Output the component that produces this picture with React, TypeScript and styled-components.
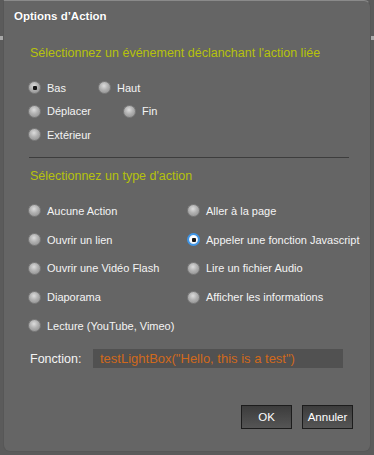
import React from "react";
import styled, { createGlobalStyle } from "styled-components";

const Global = createGlobalStyle`
  html, body { margin: 0; padding: 0; }
  body {
    width: 374px;
    height: 455px;
    overflow: hidden;
    background: linear-gradient(to bottom, #5b5b5b 0 36px, #a8a8a8 36px 40px, #5b5b5b 40px);
    font-family: "Liberation Sans", Arial, sans-serif;
  }
`;

const Page = styled.div`
  padding: 0 3px 3px 3px;
  background: transparent;
`;

const Dialog = styled.div`
  box-sizing: border-box;
  height: 452px;
  background: #656565;
  border: 1px solid #575757;
  border-top-color: #8a8a8a;
  border-radius: 0 7px 7px 7px;
  display: flex;
  flex-direction: column;
  color: #f2f2f2;
`;

const Title = styled.div`
  font-weight: bold;
  font-size: 11.5px;
  color: #ffffff;
  padding: 9px 0 0 10px;
  height: 22px;
  box-sizing: border-box;
  text-shadow: 0 0 1px rgba(0,0,0,0.3);
`;

const Body = styled.div`
  padding: 0 23px 0 24px;
  display: flex;
  flex-direction: column;
`;

const Heading = styled.div<{ $top: number }>`
  color: #b6c20c;
  font-size: 12.5px;
  padding-left: 2px;
  margin-top: ${(p) => p.$top}px;
  line-height: 16px;
`;

const FlowRow = styled.div`
  display: flex;
  align-items: center;
  gap: 32px;
  height: 23.5px;
`;

const Group = styled.div<{ $top: number }>`
  margin-top: ${(p) => p.$top}px;
  display: flex;
  flex-direction: column;
`;

const Option = styled.label`
  display: flex;
  align-items: center;
  gap: 6px;
  font-size: 11px;
  color: #f4f4f4;
  white-space: nowrap;
`;

const Dot = styled.span<{ $checked?: boolean; $focus?: boolean }>`
  position: relative;
  box-sizing: border-box;
  width: 13px;
  height: 13px;
  border-radius: 50%;
  flex: none;
  border: ${(p) => (p.$focus ? "2px solid #3f95e6" : "1px solid #7c7c7c")};
  background: ${(p) =>
    p.$focus
      ? "radial-gradient(circle at 50% 45%, #ffffff 0 45%, #dfe9f3 70%)"
      : "radial-gradient(circle at 45% 35%, #dcdcdc 0%, #b0b0b0 45%, #8a8a8a 100%)"};
  &::after {
    content: "";
    display: ${(p) => (p.$checked ? "block" : "none")};
    position: absolute;
    left: 50%;
    top: 50%;
    width: 4px;
    height: 4px;
    margin: -2px 0 0 -2px;
    background: #151515;
    border-radius: 1px;
  }
`;

const Separator = styled.hr`
  margin: 10px 0 0 1px;
  width: 320px;
  border: none;
  border-top: 1px solid #3d3d3d;
  height: 0;
`;

const Grid = styled.div`
  margin-top: 13px;
  display: grid;
  grid-template-columns: 159px 1fr;
  grid-auto-rows: 28.75px;
  align-items: center;
`;

const FieldRow = styled.div`
  margin-top: 9px;
  display: flex;
  align-items: center;
  height: 19px;
`;

const FieldLabel = styled.span`
  font-size: 12.5px;
  color: #f4f4f4;
  width: 65px;
  padding-left: 2px;
  box-sizing: border-box;
`;

const FieldValue = styled.div`
  width: 250px;
  height: 19px;
  background: #515151;
  color: #d0691c;
  font-size: 13px;
  line-height: 19px;
  padding-left: 7px;
  box-sizing: border-box;
`;

const Footer = styled.div`
  margin-top: auto;
  margin-bottom: 22px;
  padding-right: 17px;
  display: flex;
  justify-content: flex-end;
  gap: 10px;
`;

const Button = styled.button`
  width: 51px;
  height: 24px;
  box-sizing: border-box;
  border: 1px solid #1c1c1c;
  background: linear-gradient(to bottom, #3c3c3c, #555555);
  color: #ffffff;
  font-family: "Liberation Sans", Arial, sans-serif;
  font-size: 11.5px;
  padding: 0;
`;

const events = [
  [{ label: "Bas", checked: true }, { label: "Haut" }],
  [{ label: "Déplacer" }, { label: "Fin" }],
  [{ label: "Extérieur" }],
];

const actions: { label: string; checked?: boolean; focus?: boolean }[] = [
  { label: "Aucune Action" },
  { label: "Aller à la page" },
  { label: "Ouvrir un lien" },
  { label: "Appeler une fonction Javascript", checked: true, focus: true },
  { label: "Ouvrir une Vidéo Flash" },
  { label: "Lire un fichier Audio" },
  { label: "Diaporama" },
  { label: "Afficher les informations" },
  { label: "Lecture (YouTube, Vimeo)" },
];

export default function App() {
  return (
    <>
      <Global />
      <Page>
        <Dialog>
          <Title>Options d’Action</Title>
          <Body>
            <Heading $top={22}>Sélectionnez un événement déclanchant l'action liée</Heading>
            <Group $top={15}>
              {events.map((row, i) => (
                <FlowRow key={i}>
                  {row.map((o) => (
                    <Option key={o.label}>
                      <Dot $checked={(o as any).checked} />
                      {o.label}
                    </Option>
                  ))}
                </FlowRow>
              ))}
            </Group>
            <Separator />
            <Heading $top={10}>Sélectionnez un type d'action</Heading>
            <Grid>
              {actions.map((o) => (
                <Option key={o.label}>
                  <Dot $checked={o.checked} $focus={o.focus} />
                  {o.label}
                </Option>
              ))}
            </Grid>
            <FieldRow>
              <FieldLabel>Fonction:</FieldLabel>
              <FieldValue>testLightBox("Hello, this is a test")</FieldValue>
            </FieldRow>
          </Body>
          <Footer>
            <Button>OK</Button>
            <Button>Annuler</Button>
          </Footer>
        </Dialog>
      </Page>
    </>
  );
}
